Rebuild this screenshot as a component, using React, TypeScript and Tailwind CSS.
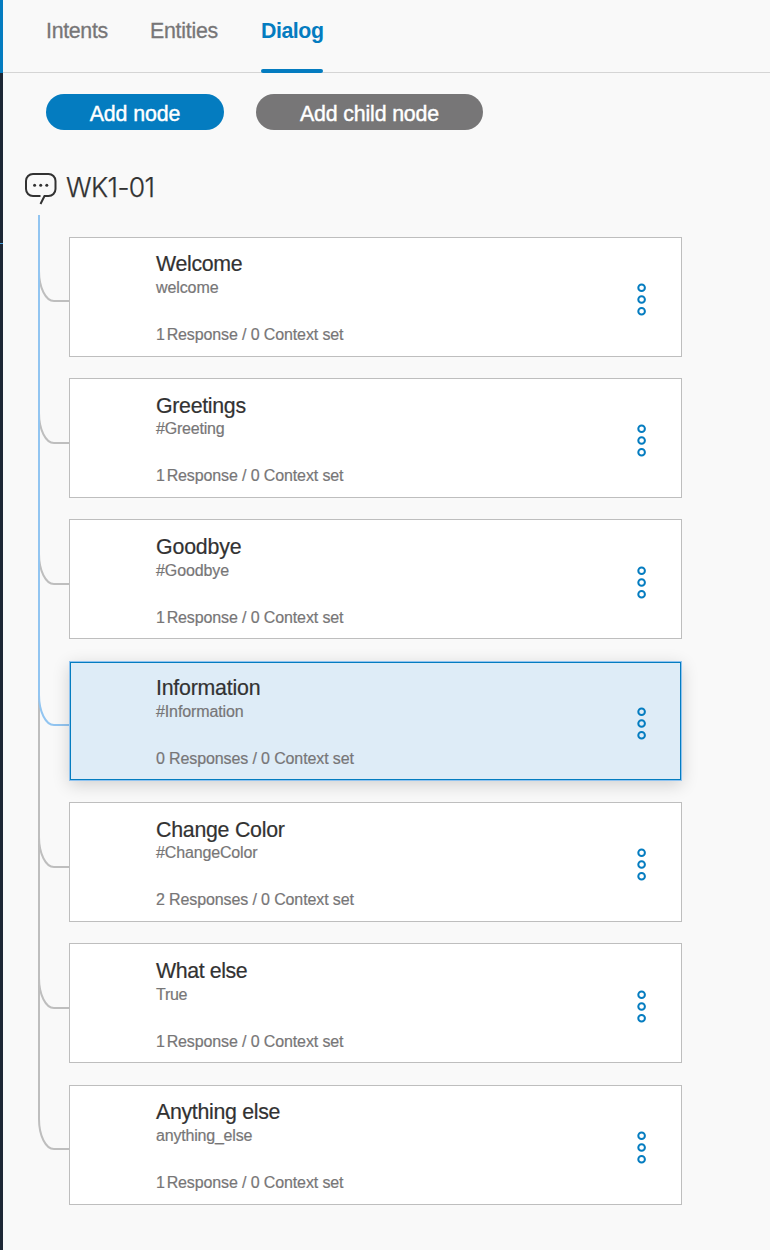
type DialogNode = {
  title: string;
  condition: string;
  count: string;
  meta: string;
  titleClass: string;
  conditionClass: string;
  cardClass: string;
  bodyClass: string;
  menuClass: string;
};

const nodes: DialogNode[] = [
  { title: "Welcome", condition: "welcome", count: "1", meta: " Response / 0 Context set", titleClass: "tracking-[-0.3px]", conditionClass: "tracking-[-0.1px]", bodyClass: "pt-[13px]", menuClass: "mt-[45px]", cardClass: "mb-[21px] border-[#bebebe] bg-white" },
  { title: "Greetings", condition: "#Greeting", count: "1", meta: " Response / 0 Context set", titleClass: "tracking-[-0.3px] pt-px", conditionClass: "tracking-[-0.2px]", bodyClass: "pt-[13px]", menuClass: "mt-[45px]", cardClass: "mb-[21px] border-[#bebebe] bg-white" },
  { title: "Goodbye", condition: "#Goodbye", count: "1", meta: " Response / 0 Context set", titleClass: "tracking-[-0.15px]", conditionClass: "tracking-[-0.1px]", bodyClass: "pt-[14px]", menuClass: "mt-[46px]", cardClass: "mb-[22px] border-[#bebebe] bg-white" },
  { title: "Information", condition: "#Information", count: "0", meta: " Responses / 0 Context set", titleClass: "tracking-[-0.22px]", conditionClass: "tracking-[-0.12px]", bodyClass: "pt-[13px]", menuClass: "mt-[45px]", cardClass: "mb-[21px] border-[#8fc3f0] bg-[#deecf7] shadow-[inset_0_0_0_1px_#047cc0,0_4px_16px_rgba(0,0,0,0.16)]" },
  { title: "Change Color", condition: "#ChangeColor", count: "2", meta: " Responses / 0 Context set", titleClass: "tracking-[-0.25px] pt-px", conditionClass: "tracking-[-0.15px]", bodyClass: "pt-[13px]", menuClass: "mt-[45px]", cardClass: "mb-[21px] border-[#bebebe] bg-white" },
  { title: "What else", condition: "True", count: "1", meta: " Response / 0 Context set", titleClass: "tracking-[-0.4px]", conditionClass: "tracking-[-0.3px]", bodyClass: "pt-[14px]", menuClass: "mt-[46px]", cardClass: "mb-[22px] border-[#bebebe] bg-white" },
  { title: "Anything else", condition: "anything_else", count: "1", meta: " Response / 0 Context set", titleClass: "tracking-[-0.3px]", conditionClass: "tracking-[-0.2px]", bodyClass: "pt-[13px]", menuClass: "mt-[45px]", cardClass: "border-[#bebebe] bg-white" },
];

function Connectors() {
  const branches = [86, 228, 369, 652, 793];
  return (
    <svg width="31" height="990" viewBox="0 0 31 990" fill="none" strokeWidth="2" className="shrink-0">
      <g stroke="#bebebe">
        <path d="M1 480 V904 A15 30 0 0 0 16 934 H31" />
        {branches.map((y) => (
          <path key={y} d={`M1 ${y - 30} A15 30 0 0 0 16 ${y} H31`} />
        ))}
      </g>
      <path d="M1 0 V480 A15 30 0 0 0 16 510 H31" stroke="#92c5f1" />
    </svg>
  );
}

function NodeCard({ node }: { node: DialogNode }) {
  return (
    <article className={`flex h-[120px] w-[613px] justify-between border pl-[86px] pr-[34px] ${node.cardClass}`}>
      <div className={`flex flex-col whitespace-nowrap [-webkit-text-stroke:0.2px] ${node.bodyClass}`}>
        <h2 className={`h-[27px] text-[21.33px] leading-[26px] text-[#323232] ${node.titleClass}`}>{node.title}</h2>
        <p className={`h-[47px] text-[16px] leading-5 text-[#777677] ${node.conditionClass}`}>{node.condition}</p>
        <p className="text-[16px] leading-5 tracking-[-0.12px] text-[#777677]">
          <span className={node.count === "1" ? "tracking-[-2.6px]" : ""}>{node.count}</span>
          {node.meta}
        </p>
      </div>
      <button aria-label="Node options" className={`h-[34px] w-[11px] ${node.menuClass}`}>
        <svg width="11" height="34" viewBox="0 0 11 34" fill="none" stroke="#047cc0" strokeWidth="2">
          <circle cx="5.6" cy="4.8" r="3.3" />
          <circle cx="5.6" cy="16.5" r="3.3" />
          <circle cx="5.6" cy="28.2" r="3.3" />
        </svg>
      </button>
    </article>
  );
}

export default function App() {
  return (
    <div className="flex h-[1250px] w-[770px] overflow-hidden bg-[#f9f9f9] font-['Liberation_Sans',Arial,sans-serif]">
      <aside className="flex w-[3px] shrink-0 flex-col bg-[#1d2735]">
        <div className="h-[73px] bg-[#047cc0]" />
        <div className="mt-[170px] h-px bg-[#4a9fd8]" />
      </aside>
      <main className="flex min-w-0 flex-1 flex-col">
        <nav className="flex h-[73px] shrink-0 border-b border-[#d5d5d5] pl-[43px] text-[21.33px] leading-6 text-[#777677]">
          <a className="mr-[42px] w-[62px] whitespace-nowrap pt-[19px] tracking-[-0.3px] [-webkit-text-stroke:0.3px]">Intents</a>
          <a className="mr-[43px] w-[68px] whitespace-nowrap pt-[19px] tracking-[-0.25px] [-webkit-text-stroke:0.3px]">Entities</a>
          <a className="flex h-[73px] w-[62px] flex-col justify-between whitespace-nowrap pt-[19px] font-bold tracking-[-0.45px] text-[#047cc0]">
            Dialog
            <span className="h-1 rounded-[2px] bg-[#047cc0]" />
          </a>
        </nav>
        <div className="mt-[21px] flex h-9 shrink-0 gap-8 pl-[43px] text-[21.33px] leading-[38px] text-white">
          <button className="w-[178px] rounded-full bg-[#047cc0] pt-px tracking-[-0.1px] [-webkit-text-stroke:0.4px_white]">Add node</button>
          <button className="w-[227px] rounded-full bg-[#777677] pt-px tracking-[-0.15px] [-webkit-text-stroke:0.4px_white]">Add child node</button>
        </div>
        <header className="mt-[40px] flex h-[45px] shrink-0 pl-[21px]">
          <svg width="34" height="38" viewBox="0 0 34 38" fill="none" stroke="#323232" strokeWidth="2" className="shrink-0">
            <path d="M16.5 26 H9 A7 7 0 0 1 2 19 V11 A7 7 0 0 1 9 4 H24.5 A7 7 0 0 1 31.5 11 V19 A7 7 0 0 1 24.5 26 H20.5 L16.5 34" />
            <g fill="#323232" stroke="none">
              <circle cx="10.6" cy="15.2" r="1.5" />
              <circle cx="16.7" cy="15.2" r="1.5" />
              <circle cx="22.8" cy="15.2" r="1.5" />
            </g>
          </svg>
          <h1 className="ml-[8px] mt-px whitespace-nowrap font-['Inter',sans-serif] text-[26.5px] font-light leading-8 tracking-[-0.6px] text-[#323232] [-webkit-text-stroke:0.25px]">WK1-01</h1>
        </header>
        <div className="flex pl-[35px]">
          <Connectors />
          <div className="mt-[22px] flex flex-col">
            {nodes.map((node) => (
              <NodeCard key={node.title} node={node} />
            ))}
          </div>
        </div>
      </main>
    </div>
  );
}
